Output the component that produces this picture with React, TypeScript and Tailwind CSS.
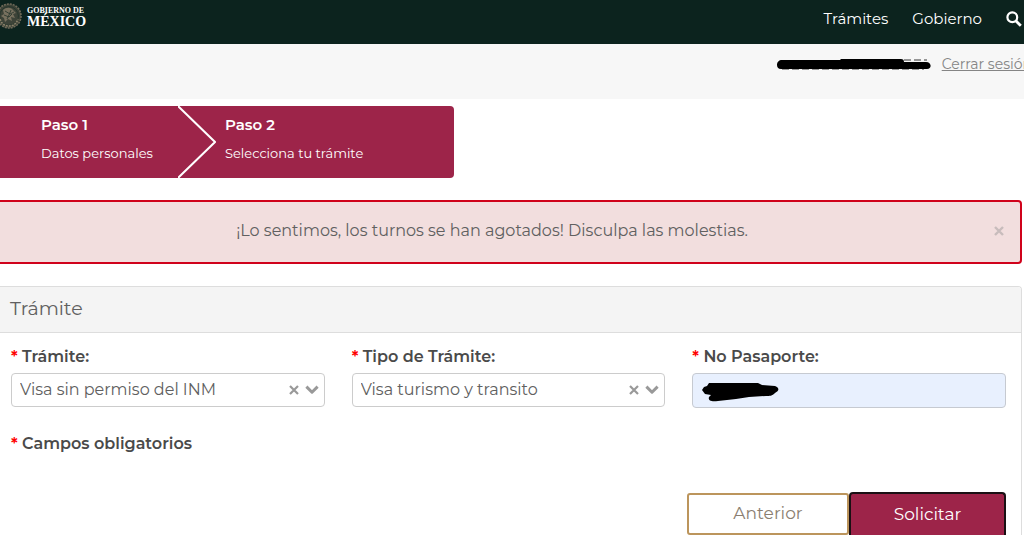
import React, { useState } from 'react';

const RequiredMark: React.FC = () => <span className="text-[#ff0000]">*</span>;

const Seal: React.FC = () => (
  <svg width="22" height="28" viewBox="0 0 22 28" fill="none" aria-hidden="true">
    <circle cx="9" cy="14" r="12" fill="#3d4338" stroke="#6f6a59" strokeWidth="1.6" strokeDasharray="2 1" />
    <circle cx="9" cy="14" r="9.4" stroke="#25352c" strokeWidth="1" />
    <path d="M3 8c3-3 8-3 10 0l3 3-3 1 2 4-4-1 1 4-4-2-3 3-1-4-3-2 3-2z" fill="#77705e" />
    <path d="M5 9l5 3 4-2M4 13l5 2 3-3M7 17l2-4M11 8l-2 5" stroke="#2c3a30" strokeWidth="0.9" />
    <path d="M0 17c2 6 6 7 9 7s7-1 9-7" stroke="#8a8069" strokeWidth="1.6" strokeDasharray="2 1" />
  </svg>
);

const SearchIcon: React.FC = () => (
  <svg width="16" height="16" viewBox="0 0 16 16" fill="none" stroke="#fff" aria-hidden="true">
    <circle cx="6.3" cy="6.3" r="4.9" strokeWidth="2.2" />
    <path d="M10 10l4.8 4.8" strokeWidth="2.8" />
  </svg>
);

interface SelectFieldProps {
  id: string;
  label: string;
  options: string[];
}

const SelectField: React.FC<SelectFieldProps> = ({ id, label, options }) => {
  const [value, setValue] = useState(options[0]);

  return (
    <div>
      <label htmlFor={id} className="block text-base leading-6 font-semibold text-[#4a4a4a]">
        <RequiredMark /> {label}
      </label>
      <div className="mt-1 flex h-[34px] items-center rounded-[4px] border border-[#cccccc] bg-white pl-2 pr-[5px]">
        <select
          id={id}
          value={value}
          onChange={(e) => setValue(e.target.value)}
          className="min-w-0 flex-1 appearance-none bg-transparent text-base leading-6 text-[#606060] outline-none"
        >
          <option value=""></option>
          {options.map((option) => (
            <option key={option} value={option}>{option}</option>
          ))}
        </select>
        <button type="button" aria-label="Limpiar" onClick={() => setValue('')} className="mr-[6px]">
          <svg width="10" height="10" viewBox="0 0 10 10" stroke="#999" strokeWidth="2.2" aria-hidden="true">
            <path d="M1 1l8 8M9 1l-8 8" />
          </svg>
        </button>
        <svg width="14" height="10" viewBox="0 0 14 10" fill="none" stroke="#999" strokeWidth="3" strokeLinejoin="round" aria-hidden="true">
          <path d="M1.4 1.6L7 7.2l5.6-5.6" />
        </svg>
      </div>
    </div>
  );
};

const App: React.FC = () => {
  const [passport, setPassport] = useState('');
  const [showAlert, setShowAlert] = useState(true);

  return (
    <div className="overflow-hidden bg-white font-['Montserrat','Inter',sans-serif] text-[#606060]">
      <header className="flex h-[44px] items-start justify-between bg-[#0c231e]">
        <a href="#" className="flex items-start pt-[2px] text-white">
          <Seal />
          <span className="ml-[5px] mt-[5px] flex flex-col font-['Liberation_Serif',serif] font-bold">
            <span className="text-[8px] leading-[8px]">GOBIERNO DE</span>
            <span className="text-[14px] leading-[14px]">MÉXICO</span>
          </span>
        </a>
        <nav className="flex items-center gap-6 pr-[2px] pt-[7px] text-[15px] leading-6 text-white">
          <a href="#">Trámites</a>
          <a href="#">Gobierno</a>
          <a href="#" aria-label="Buscar"><SearchIcon /></a>
        </nav>
      </header>

      <div className="flex h-[55px] items-start justify-end gap-[11px] bg-[#f7f7f7] pt-2">
        <svg width="155" height="24" viewBox="0 0 155 24" fill="none" aria-hidden="true">
          <path d="M128 8h23M6 17h142" stroke="#777" strokeWidth="1.4" strokeDasharray="7 3" />
          <path d="M1 13c0-3 2-5 5-5h58l1-1h60c2 0 3 1 3 3h22c6 0 6 7 1 7H5c-3 0-4-2-4-4z" fill="#000" />
        </svg>
        <a href="#" className="-mr-2 whitespace-nowrap text-[14px] leading-6 text-[#858585] underline">Cerrar sesión</a>
      </div>

      <ol className="mt-[7px] flex h-[72px] w-[454px] rounded-r-[4px] bg-[#9d2449] text-white">
        <li className="flex-1 pl-[41px] pt-[7px]">
          <p className="text-[15px] leading-6 font-semibold">Paso 1</p>
          <p className="mt-1 text-[13px] leading-6">Datos personales</p>
        </li>
        <li className="flex w-[276px]">
          <svg width="38" height="72" viewBox="0 0 38 72" fill="none" stroke="#fff" strokeWidth="2" aria-hidden="true">
            <path d="M0 0l37 36L0 72" />
          </svg>
          <div className="pl-[9px] pt-[7px]">
            <p className="text-[15px] leading-6 font-semibold">Paso 2</p>
            <p className="mt-1 text-[13px] leading-6">Selecciona tu trámite</p>
          </div>
        </li>
      </ol>

      {showAlert && (
        <div role="alert" className="mr-[2px] mt-[22px] flex h-[64px] items-center rounded-r-[4px] border-2 border-l-0 border-[#d0021b] bg-[#f2dede] pr-4">
          <p className="flex-1 pb-[2px] pr-[10px] text-center text-base leading-6">
            ¡Lo sentimos, los turnos se han agotados! Disculpa las molestias.
          </p>
          <button type="button" aria-label="Cerrar" onClick={() => setShowAlert(false)} className="mb-[2px]">
            <svg width="10" height="10" viewBox="0 0 10 10" stroke="#c8bcbc" strokeWidth="2.4" aria-hidden="true">
              <path d="M1 1l8 8M9 1l-8 8" />
            </svg>
          </button>
        </div>
      )}

      <section className="mr-[2px] mt-[22px] rounded-tr-[4px] border-r border-t border-[#dddddd]">
        <h2 className="rounded-tr-[3px] border-b border-[#dddddd] bg-[#f4f4f4] pb-[9px] pl-[10px] pt-2 text-[19px] leading-7">Trámite</h2>
        <form onSubmit={(e) => e.preventDefault()} className="pl-[11px] pr-[15px] pt-3">
          <div className="grid grid-cols-3 gap-[27px]">
            <SelectField id="tramite" label="Trámite:" options={['Visa sin permiso del INM']} />
            <SelectField id="tipo" label="Tipo de Trámite:" options={['Visa turismo y transito']} />
            <div>
              <label htmlFor="pasaporte" className="block text-base leading-6 font-semibold text-[#4a4a4a]">
                <RequiredMark /> No Pasaporte:
              </label>
              <div className="relative mt-1">
                <input
                  id="pasaporte"
                  type="text"
                  value={passport}
                  onChange={(e) => setPassport(e.target.value)}
                  className="block h-[35px] w-full rounded-[4px] border border-[#c6cad1] bg-[#e8f0fe] px-2 text-base outline-none"
                />
                <svg className="pointer-events-none absolute left-[10px] top-[10px]" width="78" height="20" viewBox="0 0 78 20" aria-hidden="true">
                  <path d="M0 7l2-3 3-1 2-3h49l4 2 13 1c5 2 4 5 0 7-3 3-5 3-9 3l-17 1-13 2-18 2c-8 1-10-1-9-4l2-2-6-1z" fill="#000" />
                </svg>
              </div>
            </div>
          </div>

          <p className="mt-6 text-base leading-6 font-semibold text-[#4a4a4a]">
            <RequiredMark /> Campos obligatorios
          </p>

          <div className="mt-9 flex justify-end">
            <button type="button" className="mt-px h-[42px] w-[162px] rounded-[3px] border-2 border-[#bc955c] bg-white text-[17px] text-[#8a7e70]">
              Anterior
            </button>
            <button type="submit" className="h-[43px] w-[157px] rounded-t-[4px] border-2 border-b-0 border-[#1a1014] bg-[#9d2449] text-[17px] text-white">
              Solicitar
            </button>
          </div>
        </form>
      </section>
    </div>
  );
};

export default App;
